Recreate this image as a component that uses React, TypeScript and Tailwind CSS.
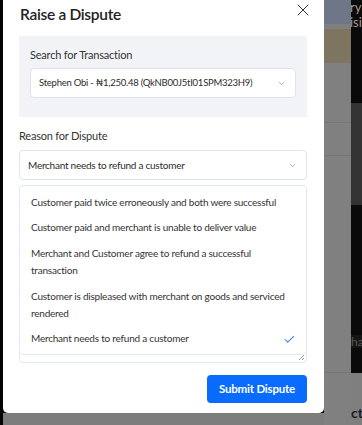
import { X, ChevronDown, Check } from "lucide-react";

const reasons = [
	"Customer paid twice erroneously and both were successful",
	"Customer paid and merchant is unable to deliver value",
	"Merchant and Customer agree to refund a successful transaction",
	"Customer is displeased with merchant on goods and serviced rendered",
	"Merchant needs to refund a customer",
];

const selected = "Merchant needs to refund a customer";

function Backdrop() {
	return (
		<>
			<div className="w-[27px] flex flex-col bg-[#808080]">
				<div className="h-[24px] bg-[#6f7688]" />
				<div className="h-[5px]" />
				<div className="h-[34px] bg-[#7d7560]" />
				<div className="h-[60px] border-b border-[#767676]" />
				<div className="h-[33px] border-b border-[#767676]" />
				<div className="h-[217px] border-b border-[#767676]" />
			</div>
			<div className="flex-1 flex flex-col bg-[#0a0a0a] text-[13px] leading-[15px] text-[#9a9a9a] overflow-hidden whitespace-nowrap">
				<div className="h-[103px] -ml-[1px]">
					<div>ry</div>
					<div>isi</div>
				</div>
				<div className="h-[102px] bg-[#333333]" />
				<div className="h-[130px]" />
				<div className="h-[13px] bg-[#161616] text-[#555] text-[12px] leading-[13px]">ha</div>
				<div className="h-[25px]" />
				<div className="flex-1 flex items-end pb-[5px] text-[#1c1c1c] font-bold text-[14px] bg-[#7f7f7f]">cti</div>
			</div>
		</>
	);
}

export default function App() {
	return (
		<div
			className="w-[362px] h-[425px] flex bg-[#0a0a0a] overflow-hidden text-[#2c2c2c]"
			style={{ fontFamily: "Lato, 'Noto Sans', sans-serif" }}
		>
			<div className="w-[3px] bg-[#050505]" />
			<div className="w-[321px] flex flex-col">
				<div className="h-[413px] bg-white rounded-b-[5px] pl-[16px] pr-[17px] flex flex-col">
					<div className="flex items-start justify-between h-[36px]">
						<h2 className="mt-[4px] ml-[1px] text-[15.5px] leading-[20px] font-semibold tracking-[-0.3px] text-[#222]">
							Raise a Dispute
						</h2>
						<X size={20} strokeWidth={1.2} className="mt-0 -mr-[6px] text-[#333]" />
					</div>

					<div className="bg-[#f2f3f7] h-[81px] px-[11px] pt-[12px]">
						<div className="text-[11px] leading-[14px] tracking-[-0.2px] text-[#333]">Search for Transaction</div>
						<div className="mt-[6px] h-[30px] bg-white border border-[#dfe3ea] rounded-[4px] flex items-center justify-between pl-[8px] pr-[9px]">
							<span className="text-[9.5px] tracking-[-0.25px] text-[#2c2c2c]">
								Stephen Obi - ₦1,250.48 (QkNB00J5tI01SPM323H9)
							</span>
							<ChevronDown size={9} strokeWidth={1.6} className="text-[#777]" />
						</div>
					</div>

					<div className="mt-[12px] text-[11px] leading-[14px] tracking-[-0.2px] text-[#333]">Reason for Dispute</div>
					<div className="mt-[7px] h-[30px] border border-[#dfe3ea] rounded-[4px] flex items-center justify-between pl-[8px] pr-[9px]">
						<span className="text-[10px] tracking-[-0.25px]">{selected}</span>
						<ChevronDown size={9} strokeWidth={1.6} className="text-[#777]" />
					</div>

					<div className="relative mt-[5px] h-[178px] border border-[#e3e7ee] rounded-[4px]">
						<ul className="h-[169px] border-b border-[#e3e7ee] rounded-b-[4px] pt-[4px] pl-[11px] pr-[10px]">
							{reasons.map((r) => (
								<li key={r} className="flex items-center justify-between py-[4px] text-[10px] leading-[17.4px] tracking-[-0.22px] text-[#333]">
									<span className="w-[258px]">{r}</span>
									{r === selected && (
										<Check size={13} strokeWidth={2} className="text-[#3b82f6]" />
									)}
								</li>
							))}
						</ul>
						<svg
							className="absolute right-[1px] bottom-[1px]"
							width="7"
							height="7"
							viewBox="0 0 7 7"
						>
							<path d="M6 1 L1 6 M6 4 L4 6" stroke="#888" strokeWidth="0.8" />
						</svg>
					</div>

					<div className="flex justify-end mt-[12px]">
						<button className="w-[100px] h-[28px] bg-[#0a6cff] rounded-[4px] text-white text-[11.5px] tracking-[-0.2px] font-bold">
							Submit Dispute
						</button>
					</div>
				</div>
				<div className="flex-1 bg-[#7d7d7d]" />
			</div>
			<Backdrop />
		</div>
	);
}
